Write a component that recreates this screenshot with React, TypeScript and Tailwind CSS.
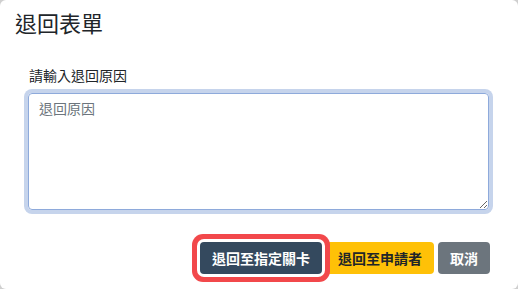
import { useEffect, useRef } from 'react';

const font = { fontFamily: '"Noto Sans CJK TC", "Noto Sans", sans-serif' };

export default function App() {
  const ref = useRef<HTMLTextAreaElement>(null);

  useEffect(() => {
    ref.current?.focus();
  }, []);

  return (
    <div className="w-[518px] h-[289px] bg-[#cfcfcf]" style={font}>
      <div className="w-full h-full bg-white rounded-[6px] flex flex-col">
        {/* Header */}
        <div className="pl-[15px] pt-[6px]">
          <h5 className="text-[22px] leading-[33px] text-[#212529] font-normal">退回表單</h5>
        </div>

        {/* Body */}
        <div className="pl-[28px] pr-[29px] pt-[26px]">
          <label className="block text-[14px] leading-[21px] text-[#212529] pl-[1px]">請輸入退回原因</label>
          <textarea
            ref={ref}
            placeholder="退回原因"
            className="mt-[7px] block w-[461px] h-[117px] border border-[#8eaadb] rounded-[4px] shadow-[0_0_0_4px_#c6d4ec] outline-none pl-[10px] pt-[4px] text-[14px] leading-[21px] text-[#212529] placeholder:text-[#6c757d]"
            style={font}
          />
        </div>

        {/* Footer */}
        <div className="flex justify-end items-center pr-[28px] pt-[32px] gap-[4px]">
          <button className="relative z-10 h-8 px-3 rounded-[4px] bg-[#34495e] text-white text-[14px] font-bold shadow-[0_0_0_3px_#fff,0_0_0_8px_#f2484b]">
            退回至指定關卡
          </button>
          <button className="h-8 px-3 rounded-[4px] bg-[#ffc107] text-[#212529] text-[14px] font-bold">
            退回至申請者
          </button>
          <button className="h-8 px-3 rounded-[4px] bg-[#6c757d] text-white text-[14px] font-bold">
            取消
          </button>
        </div>
      </div>
    </div>
  );
}
